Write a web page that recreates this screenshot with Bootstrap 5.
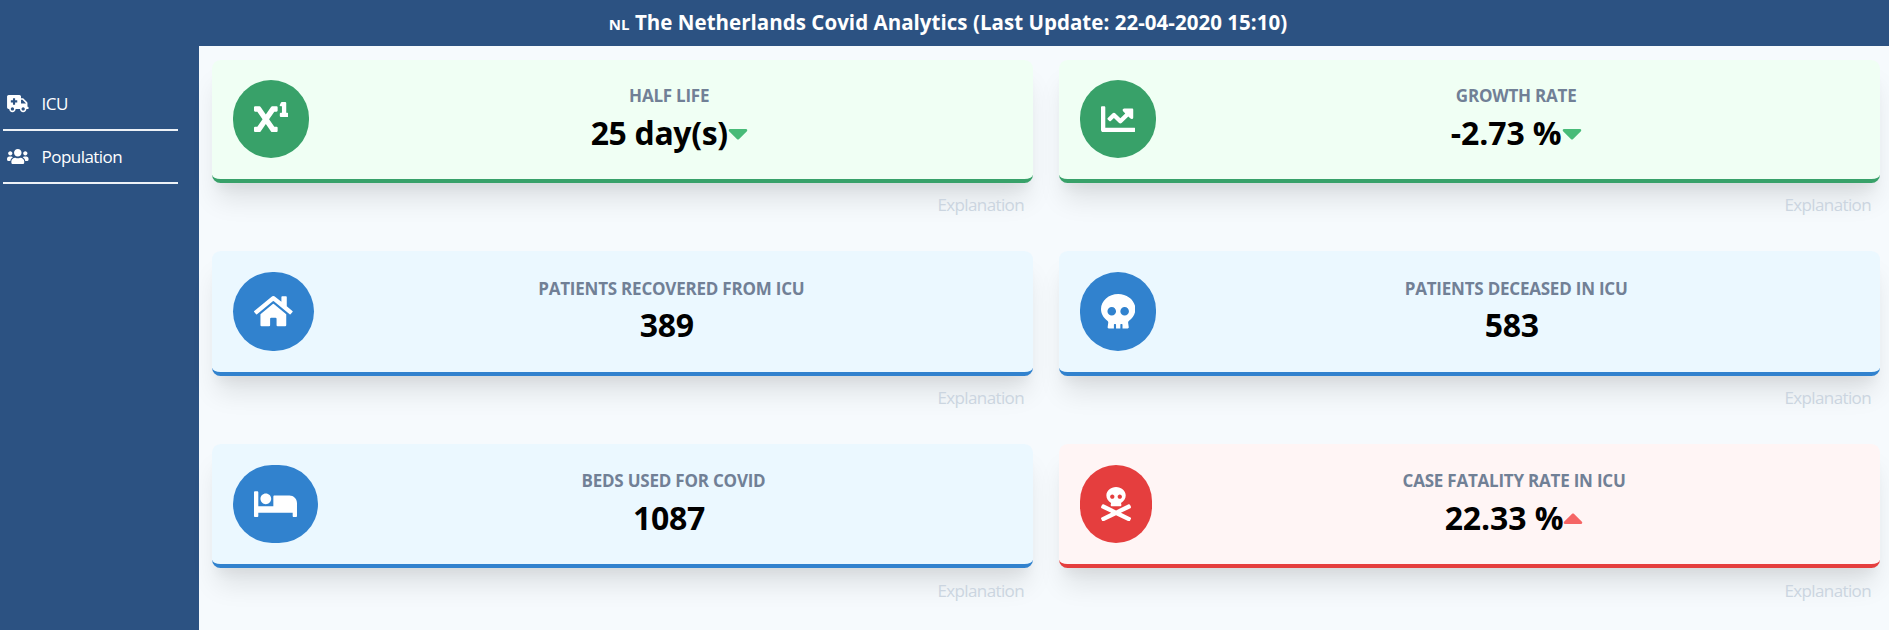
<!DOCTYPE html>
<html lang="en">
<head>
<meta charset="utf-8">
<meta name="viewport" content="width=device-width, initial-scale=1">
<title>The Netherlands Covid Analytics</title>
<link href="https://cdn.jsdelivr.net/npm/bootstrap@5.3.0/dist/css/bootstrap.min.css" rel="stylesheet">
<style>
  body { font-family: "Segoe UI", "Open Sans", "Noto Sans", sans-serif; font-size: 17px; line-height: 26px; background: #f6fafd; color: #000; }
  .topbar { height: 46px; padding-left: 7px; background: #2c5282; color: #fff; font-size: 20.5px; letter-spacing: .03px; }
  .topbar .cc { font-size: 15px; }
  .side { width: 199px; background: #2c5282; padding: 32px 21px 0 3px; }
  .side a { height: 53px; padding: 1px 4px 0; border-bottom: 2px solid #edf2f7; color: #fff; gap: 13px; letter-spacing: -.55px; }
  svg { fill: currentColor; display: block; }
  .side svg { height: 17.2px; width: 21.6px; }
  .board { padding: 14px 9px 0 13px; }
  .stats { display: grid; grid-template-columns: 821px 821px; column-gap: 26px; grid-template-rows: 191px 193px 186px; }
  .stat { height: 123px; padding: 20px 21px 0; gap: 17px; border-bottom: 4px solid; border-radius: 8.6px; box-shadow: 0 21px 27px -5px rgba(0,0,0,.1), 0 11px 11px -5px rgba(0,0,0,.04); }
  .mid .stat { height: 125px; padding-top: 21px; }
  .low .stat { height: 124px; padding-top: 21px; }
  .mid .disc { height: 79px; }
  .green { background: #f0fff4; border-color: #38a169; }
  .blue { background: #ebf8ff; border-color: #3182ce; }
  .red { background: #fff5f5; border-color: #e53e3e; }
  .disc { height: 78px; padding: 0 21px; border-radius: 40px; color: #fff; }
  .disc svg { height: 34.4px; }
  .green .disc { background: #38a169; } .blue .disc { background: #3182ce; } .red .disc { background: #e53e3e; }
  .label { font-size: 17px; line-height: 26px; color: #718096; margin: 3px 0 0; letter-spacing: -.22px; }
  .mid .label { margin: 4px 0 -1px; }
  .value { font-size: 32px; line-height: 48px; margin: 0; letter-spacing: -.1px; }
  .value.tight { letter-spacing: -.35px; }
  .value.plain { padding-right: 9px; letter-spacing: -.3px; }
  .value svg { display: inline-block; height: 32px; width: 20px; vertical-align: -4px; }
  .down { color: #48bb78; } .up { color: #f56565; }
  .more { color: #cbd5e0; padding: 9px 9px 0; letter-spacing: -.62px; position: relative; }
  .low .more { padding-top: 10px; }
</style>
</head>
<body class="vh-100 d-flex flex-column">
<header class="topbar d-flex flex-shrink-0 align-items-center justify-content-center fw-bold"><div><span class="cc">NL</span> The Netherlands Covid Analytics (Last Update: 22-04-2020 15:10)</div></header>
<div class="d-flex flex-grow-1">
  <nav class="side flex-shrink-0">
    <a class="d-flex align-items-center text-decoration-none" href="#"><svg viewBox="0 0 640 512"><path d="M624 352h-16V243.9c0-12.7-5.1-24.9-14.1-33.9L494 110.1c-9-9-21.2-14.1-33.9-14.1H416V48c0-26.5-21.5-48-48-48H48C21.5 0 0 21.5 0 48v320c0 26.5 21.5 48 48 48h16c0 53 43 96 96 96s96-43 96-96h128c0 53 43 96 96 96s96-43 96-96h48c8.8 0 16-7.2 16-16v-32c0-8.8-7.2-16-16-16zM160 464c-26.5 0-48-21.5-48-48s21.5-48 48-48 48 21.5 48 48-21.5 48-48 48zm144-248c0 4.4-3.6 8-8 8h-56v56c0 4.4-3.6 8-8 8h-48c-4.4 0-8-3.6-8-8v-56h-56c-4.4 0-8-3.6-8-8v-48c0-4.4 3.6-8 8-8h56v-56c0-4.4 3.6-8 8-8h48c4.4 0 8 3.6 8 8v56h56c4.4 0 8 3.6 8 8v48zm176 248c-26.5 0-48-21.5-48-48s21.5-48 48-48 48 21.5 48 48-21.5 48-48 48zm80-208H416V144h44.1l99.9 99.9V256z"/></svg><span>ICU</span></a>
    <a class="d-flex align-items-center text-decoration-none" href="#"><svg viewBox="0 0 640 512"><path d="M96 224c35.3 0 64-28.7 64-64s-28.7-64-64-64-64 28.7-64 64 28.7 64 64 64zm448 0c35.3 0 64-28.7 64-64s-28.7-64-64-64-64 28.7-64 64 28.7 64 64 64zm32 32h-64c-17.6 0-33.5 7.1-45.1 18.6 40.3 22.1 68.9 62 75.1 109.4h66c17.7 0 32-14.3 32-32v-32c0-35.3-28.7-64-64-64zm-256 0c61.9 0 112-50.1 112-112S381.9 32 320 32 208 82.1 208 144s50.1 112 112 112zm76.8 32h-8.3c-20.8 10-43.9 16-68.5 16s-47.6-6-68.5-16h-8.3C179.6 288 128 339.6 128 403.2V432c0 26.5 21.5 48 48 48h288c26.5 0 48-21.5 48-48v-28.8c0-63.6-51.6-115.2-115.2-115.2zm-223.7-13.4C161.5 263.1 145.6 256 128 256H64c-35.3 0-64 28.7-64 64v32c0 17.7 14.3 32 32 32h65.9c6.3-47.4 34.9-87.3 75.2-109.4z"/></svg><span>Population</span></a>
  </nav>
  <main class="board flex-grow-1">
    <div class="stats">
      <section>
        <div class="stat green d-flex align-items-start"><div class="disc d-flex align-items-center"><svg viewBox="0 0 512 512"><path d="M496 160h-16V16a16 16 0 0 0-16-16h-48a16 16 0 0 0-14.29 8.83l-16 32A16 16 0 0 0 400 64h16v96h-16a16 16 0 0 0-16 16v32a16 16 0 0 0 16 16h96a16 16 0 0 0 16-16v-32a16 16 0 0 0-16-16zM336 64h-67a16 16 0 0 0-13.14 6.87l-79.9 115-79.9-115A16 16 0 0 0 83 64H16A16 16 0 0 0 0 80v48a16 16 0 0 0 16 16h33.48l77.81 112-77.81 112H16a16 16 0 0 0-16 16v48a16 16 0 0 0 16 16h67a16 16 0 0 0 13.14-6.87l79.9-115 79.9 115A16 16 0 0 0 269 448h67a16 16 0 0 0 16-16v-48a16 16 0 0 0-16-16h-33.48l-77.81-112 77.81-112H336a16 16 0 0 0 16-16V80a16 16 0 0 0-16-16z"/></svg></div>
          <div class="flex-grow-1 text-center"><h5 class="label fw-bold">HALF LIFE</h5><h3 class="value tight fw-bold">25 day(s)<svg class="down" viewBox="0 0 320 512"><path d="M31.3 192h257.3c17.8 0 26.7 21.5 14.1 34.1L174.1 354.8c-7.8 7.8-20.5 7.8-28.3 0L17.2 226.1C4.6 213.5 13.5 192 31.3 192z"/></svg></h3></div></div>
        <div class="more text-end">Explanation</div>
      </section>
      <section>
        <div class="stat green d-flex align-items-start"><div class="disc d-flex align-items-center"><svg viewBox="0 0 512 512"><path d="M496 384H64V80c0-8.84-7.16-16-16-16H16C7.16 64 0 71.16 0 80v336c0 17.67 14.33 32 32 32h464c8.84 0 16-7.16 16-16v-32c0-8.84-7.16-16-16-16zM464 96H345.94c-21.38 0-32.09 25.85-16.97 40.97l32.4 32.4L288 242.75l-73.37-73.37c-12.5-12.5-32.76-12.5-45.25 0l-68.69 68.69c-6.25 6.25-6.25 16.38 0 22.63l22.62 22.62c6.25 6.25 16.38 6.25 22.63 0L192 237.25l73.37 73.37c12.5 12.5 32.76 12.5 45.25 0l96-96 32.4 32.4c15.12 15.12 40.97 4.41 40.97-16.97V112c.01-8.84-7.15-16-15.99-16z"/></svg></div>
          <div class="flex-grow-1 text-center"><h5 class="label fw-bold">GROWTH RATE</h5><h3 class="value fw-bold">-2.73 %<svg class="down" viewBox="0 0 320 512"><path d="M31.3 192h257.3c17.8 0 26.7 21.5 14.1 34.1L174.1 354.8c-7.8 7.8-20.5 7.8-28.3 0L17.2 226.1C4.6 213.5 13.5 192 31.3 192z"/></svg></h3></div></div>
        <div class="more text-end">Explanation</div>
      </section>
      <section class="mid">
        <div class="stat blue d-flex align-items-start"><div class="disc d-flex align-items-center"><svg viewBox="0 0 576 512"><path d="M280.37 148.26L96 300.11V464a16 16 0 0 0 16 16l112.06-.29a16 16 0 0 0 15.92-16V368a16 16 0 0 1 16-16h64a16 16 0 0 1 16 16v95.64a16 16 0 0 0 16 16.05L464 480a16 16 0 0 0 16-16V300L295.67 148.26a12.19 12.19 0 0 0-15.3 0zM571.6 251.47L488 182.56V44.05a12 12 0 0 0-12-12h-56a12 12 0 0 0-12 12v72.61L318.47 43a48 48 0 0 0-61 0L4.34 251.47a12 12 0 0 0-1.6 16.9l25.5 31A12 12 0 0 0 45.15 301l235.22-193.74a12.19 12.19 0 0 1 15.3 0L530.9 301a12 12 0 0 0 16.9-1.6l25.5-31a12 12 0 0 0-1.7-16.93z"/></svg></div>
          <div class="flex-grow-1 text-center"><h5 class="label fw-bold">PATIENTS RECOVERED FROM ICU</h5><h3 class="value plain fw-bold">389</h3></div></div>
        <div class="more text-end">Explanation</div>
      </section>
      <section class="mid">
        <div class="stat blue d-flex align-items-start"><div class="disc d-flex align-items-center"><svg viewBox="0 0 512 512"><path d="M256 0C114.6 0 0 100.3 0 224c0 70.1 36.9 132.6 94.5 173.7 9.6 6.9 15.2 18.1 13.5 29.9l-9.4 66.2c-1.4 9.6 6 18.2 15.7 18.2H192v-56c0-4.4 3.6-8 8-8h16c4.4 0 8 3.6 8 8v56h64v-56c0-4.4 3.6-8 8-8h16c4.4 0 8 3.6 8 8v56h77.7c9.7 0 17.1-8.6 15.7-18.2l-9.4-66.2c-1.7-11.7 3.8-23 13.5-29.9C475.1 356.6 512 294.1 512 224 512 100.3 397.4 0 256 0zm-96 320c-35.3 0-64-28.7-64-64s28.7-64 64-64 64 28.7 64 64-28.7 64-64 64zm192 0c-35.3 0-64-28.7-64-64s28.7-64 64-64 64 28.7 64 64-28.7 64-64 64z"/></svg></div>
          <div class="flex-grow-1 text-center"><h5 class="label fw-bold">PATIENTS DECEASED IN ICU</h5><h3 class="value plain fw-bold">583</h3></div></div>
        <div class="more text-end">Explanation</div>
      </section>
      <section class="low">
        <div class="stat blue d-flex align-items-start"><div class="disc d-flex align-items-center"><svg viewBox="0 0 640 512"><path d="M176 256c44.11 0 80-35.89 80-80s-35.89-80-80-80-80 35.89-80 80 35.89 80 80 80zm352-128H304c-8.84 0-16 7.16-16 16v144H64V80c0-8.84-7.16-16-16-16H16C7.16 64 0 71.16 0 80v352c0 8.84 7.16 16 16 16h32c8.84 0 16-7.16 16-16v-48h512v48c0 8.84 7.16 16 16 16h32c8.84 0 16-7.16 16-16V240c0-61.86-50.14-112-112-112z"/></svg></div>
          <div class="flex-grow-1 text-center"><h5 class="label fw-bold">BEDS USED FOR COVID</h5><h3 class="value plain fw-bold">1087</h3></div></div>
        <div class="more text-end">Explanation</div>
      </section>
      <section class="low">
        <div class="stat red d-flex align-items-start"><div class="disc d-flex align-items-center"><svg viewBox="0 0 448 512"><path d="M439.15 453.06L297.17 384l141.99-69.06c7.9-3.95 11.11-13.56 7.15-21.46L432 264.85c-3.95-7.9-13.56-11.11-21.47-7.16L224 348.41 37.47 257.69c-7.9-3.95-17.51-.75-21.47 7.16L1.69 293.48c-3.95 7.9-.75 17.51 7.15 21.46L150.83 384 8.85 453.06c-7.9 3.95-11.11 13.56-7.15 21.47l14.31 28.63c3.95 7.9 13.56 11.11 21.47 7.15L224 419.59l186.53 90.72c7.9 3.95 17.51.75 21.47-7.15l14.31-28.63c3.95-7.91.74-17.52-7.16-21.47zM150 237.28l-5.48 25.87c-2.67 12.62 5.42 24.85 16.45 24.85h126.08c11.03 0 19.12-12.23 16.45-24.85l-5.5-25.87c41.78-22.41 70-62.75 70-109.28C368 57.31 303.53 0 224 0S80 57.31 80 128c0 46.53 28.21 86.87 70 109.28zM280 112c17.65 0 32 14.37 32 32s-14.35 32-32 32-32-14.37-32-32 14.35-32 32-32zm-112 0c17.65 0 32 14.37 32 32s-14.35 32-32 32-32-14.37-32-32 14.35-32 32-32z"/></svg></div>
          <div class="flex-grow-1 text-center"><h5 class="label fw-bold">CASE FATALITY RATE IN ICU</h5><h3 class="value fw-bold">22.33 %<svg class="up" viewBox="0 0 320 512"><path d="M288.662 352H31.338c-17.818 0-26.741-21.543-14.142-34.142l128.662-128.662c7.81-7.81 20.474-7.81 28.284 0l128.662 128.662c12.6 12.599 3.676 34.142-14.142 34.142z"/></svg></h3></div></div>
        <div class="more text-end">Explanation</div>
      </section>
    </div>
  </main>
</div>
<script src="https://cdn.jsdelivr.net/npm/bootstrap@5.3.0/dist/js/bootstrap.bundle.min.js"></script>
</body>
</html>
